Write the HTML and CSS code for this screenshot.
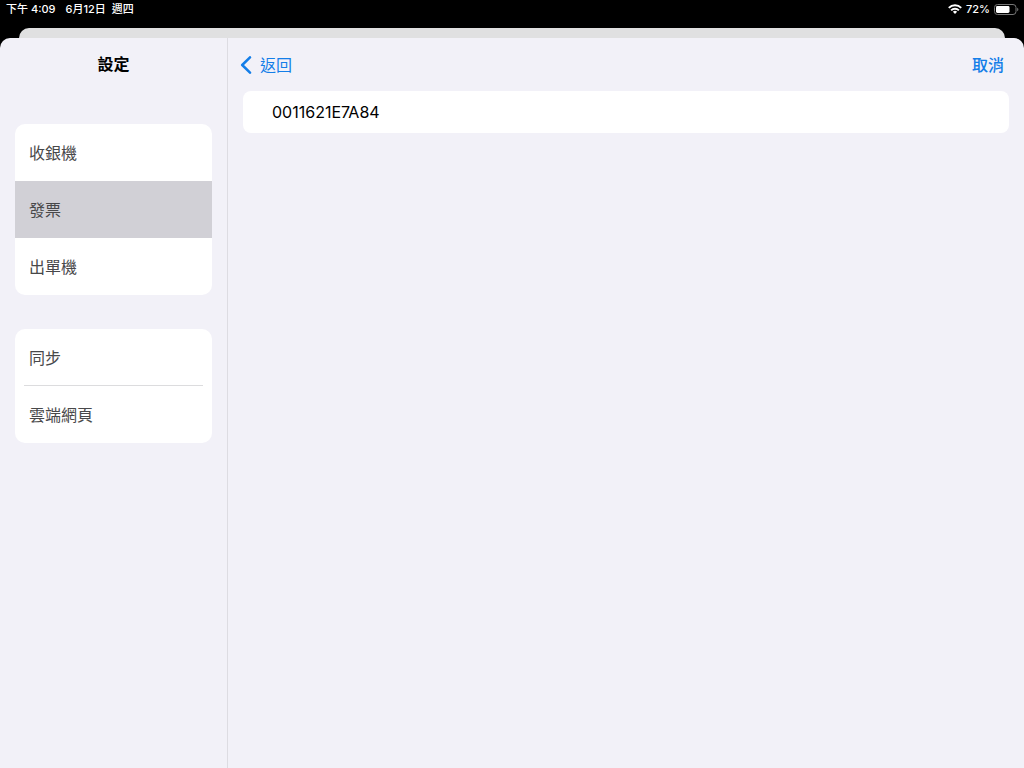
FILE: index.html
```
<!DOCTYPE html>
<html lang="zh-Hant">

<head>
    <meta charset="UTF-8">
    <meta name="viewport" content="width=device-width, initial-scale=1.0">
    <title>設定</title>
    <link rel="stylesheet" href="styles.css">
</head>

<body>
    <div class="status-bar">
        <div class="status-left">
            <span>下午 4:09</span>
            <span class="date"><span>6月12日</span> <span>週四</span></span>
        </div>
        <div class="status-right">
            <svg class="wifi" width="14" height="10" viewBox="0 0 14 10" aria-hidden="true">
                <g fill="none" stroke="#fff" stroke-width="2">
                    <path d="M0.8 3.9a8.8 8.8 0 0 1 12.4 0" />
                    <path d="M3.1 6.4a5.5 5.5 0 0 1 7.8 0" />
                </g>
                <path d="M7 10L4.9 7.8a3 3 0 0 1 4.2 0z" fill="#fff" />
            </svg>
            <span>72%</span>
            <svg class="battery" width="25" height="11" viewBox="0 0 25 11" aria-hidden="true">
                <rect x="0.5" y="0.5" width="21.5" height="10" rx="3" fill="none" stroke="#777" />
                <rect x="2" y="2" width="13.5" height="7" rx="1.4" fill="#fff" />
                <path d="M23.2 3.8c1.6 0.6 1.6 2.8 0 3.4z" fill="#777" />
            </svg>
        </div>
    </div>
    <div class="back-sheet"></div>
    <div class="sheet">
        <nav class="sidebar">
            <h1 class="title">設定</h1>
            <div class="group">
                <button type="button" class="item">收銀機</button>
                <button type="button" class="item active">發票</button>
                <button type="button" class="item">出單機</button>
            </div>
            <div class="group">
                <button type="button" class="item divided">同步</button>
                <button type="button" class="item">雲端網頁</button>
            </div>
        </nav>
        <main class="content">
            <header class="toolbar">
                <button type="button" class="back">
                    <svg width="12" height="18" viewBox="0 0 12 18" aria-hidden="true">
                        <path d="M10 1.3L2.2 9l7.8 7.7" fill="none" stroke="currentColor" stroke-width="2.5" stroke-linecap="round" stroke-linejoin="round" />
                    </svg>
                    返回
                </button>
                <button type="button" class="cancel">取消</button>
            </header>
            <ul class="devices">
                <li>0011621E7A84</li>
            </ul>
        </main>
    </div>
</body>

</html>
```
FILE: styles.css
```
* {
    box-sizing: border-box;
}
body {
    font-family: Inter, "Noto Sans CJK TC", sans-serif;
    margin: 0;
    min-height: 100vh;
    display: flex;
    flex-direction: column;
    background-color: #000000;
    color: #000000;
    font-size: 16px;
}
button {
    padding: 0;
    border: none;
    background: none;
    font: inherit;
    cursor: pointer;
}
.status-bar {
    display: flex;
    justify-content: space-between;
    height: 28px;
    padding: 0 5px 0 6px;
    color: #ffffff;
    font-size: 11px;
    font-weight: 500;
    line-height: 18px;
}
.status-left {
    display: flex;
    gap: 10px;
}
.date {
    display: flex;
    gap: 6px;
}
.status-right {
    display: flex;
    align-items: center;
    gap: 4px;
    height: 18px;
}
.back-sheet {
    height: 10px;
    margin: 0 19px;
    border-radius: 10px 10px 0 0;
    background-color: #e0e0e1;
}
.sheet {
    flex: 1;
    display: flex;
    border-radius: 10px 10px 0 0;
    background-color: #f2f1f8;
    overflow: hidden;
}
.sidebar {
    width: 228px;
    padding: 0 15px;
    border-right: 1px solid #dddce2;
}
.title {
    margin: 0 0 34px;
    font-size: 16px;
    font-weight: 700;
    line-height: 52px;
    text-align: center;
}
.group {
    margin-bottom: 34px;
    border-radius: 10px;
    background-color: #ffffff;
    overflow: hidden;
}
.item {
    display: block;
    width: 100%;
    height: 57px;
    padding: 0 14px;
    color: #48484a;
    line-height: 56px;
    text-align: left;
}
.item.active {
    background-color: #d1d0d6;
}
.item.divided {
    background: linear-gradient(#dcdcde, #dcdcde) center bottom / calc(100% - 18px) 1px no-repeat;
}
.content {
    flex: 1;
    padding: 0 15px;
}
.toolbar {
    display: flex;
    justify-content: space-between;
    align-items: center;
    height: 53px;
    margin: 0 5px 0 -3px;
}
.back,
.cancel {
    color: #147ee8;
    line-height: 52px;
}
.back {
    display: flex;
    align-items: center;
    gap: 8px;
}
.cancel {
    font-weight: 500;
}
.devices {
    list-style: none;
    margin: 0;
    padding: 0 29px;
    border-radius: 8px;
    background-color: #ffffff;
    line-height: 42px;
}
```
